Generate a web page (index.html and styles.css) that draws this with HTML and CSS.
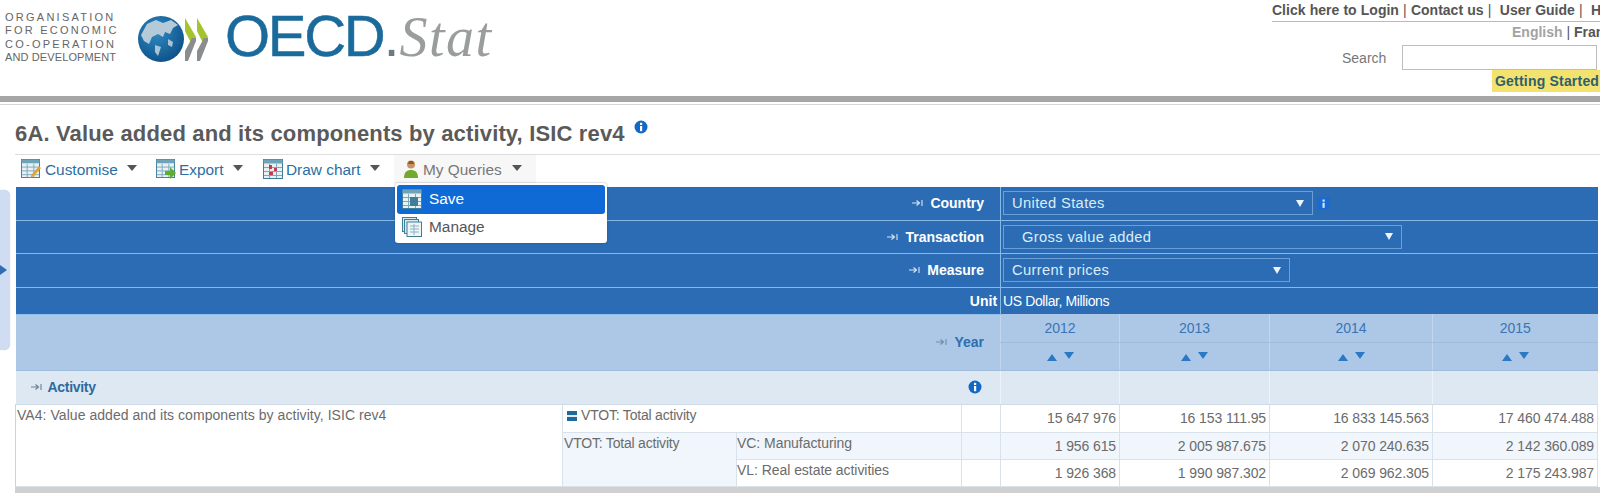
FILE: index.html
```html
<!DOCTYPE html>
<html lang="en">
<head>
<meta charset="utf-8">
<title>OECD.Stat</title>
<link rel="stylesheet" href="styles.css">
</head>
<body>
<svg class="defs" width="0" height="0" aria-hidden="true">
  <symbol id="pin" viewBox="0 0 12 10"><path d="M0 5h7M4.500 2.500 7.500 5l-3 2.500M10 2v6" fill="none" stroke="currentColor" stroke-width="1.1"/></symbol>
  <symbol id="info" viewBox="0 0 14 14"><circle cx="7" cy="7" r="6.500" fill="#1268c4"/><rect x="6" y="2.800" width="2.200" height="2.200" fill="#fff"/><rect x="6" y="6" width="2.200" height="5.200" fill="#fff"/></symbol>
  <symbol id="grid" viewBox="0 0 20 20"><rect x=".5" y=".5" width="19" height="19" fill="#eaf1f5" stroke="#3c7f96"/><rect x=".5" y=".5" width="19" height="4" fill="#6ea3b8"/><path d="M1 8.500h18M1 12.500h18M1 16.500h18M6.500 5v14M13.500 5v14" stroke="#7ba9bb"/></symbol>
</svg>

<header class="masthead">
  <div class="brand">
    <div class="org">
      <span>ORGANISATION</span>
      <span>FOR ECONOMIC</span>
      <span>CO-OPERATION</span>
      <span class="org-last">AND DEVELOPMENT</span>
    </div>
    <svg class="globe" width="72" height="48" viewBox="0 0 72 48">
      <defs><radialGradient id="sea" cx="40%" cy="35%" r="70%"><stop offset="0" stop-color="#2f8bc4"/><stop offset="1" stop-color="#0d4f86"/></radialGradient></defs>
      <circle cx="23" cy="24" r="23" fill="url(#sea)"/>
      <path d="M3 20 9 9l9-4 7 3 8-3 7 5-5 3-3 6-5-2-2 5-5-3-6 3-3 7-5-3z" fill="#b4cad8"/>
      <path d="M30 24l5 3-1 5-4-2zM17 30l6 2-3 9-3-4z" fill="#a9c3d4"/>
      <path d="M47 3l11 19-3.500 9L47 16z" fill="#a3c42c"/><path d="M58 23v3L50 46h-3V36l7-13z" fill="#8a8d90"/>
      <path d="M59 3l11 19-3.500 9L59 16z" fill="#a3c42c"/><path d="M70 23v3L62 46h-3V36l7-13z" fill="#8a8d90"/>
    </svg>
    <div class="wordmark"><span class="oecd">OECD</span><span class="dot">.</span><span class="stat">Stat</span></div>
  </div>
  <div class="toplinks">
    <div class="links"><b>Click here to Login</b> | <b>Contact us</b> |&nbsp; <b>User Guide</b> |&nbsp; <b>Help</b></div>
    <div class="lang"><span class="lang-on">English</span> | <b>Français</b></div>
    <div class="search"><label for="q">Search</label><input id="q" class="search-box" type="text"></div>
    <div class="started"><span>Getting Started</span></div>
  </div>
</header>
<div class="bar"></div>
<div class="rule"></div>

<h1 class="title">6A. Value added and its components by activity, ISIC rev4 <svg class="title-info"><use href="#info"/></svg></h1>

<nav class="toolbar">
  <div class="tool tool-customise">
    <svg class="tool-ico" viewBox="0 0 21 21"><use href="#grid" width="19" height="19"/><path d="M9 19l2-4 7-8 2 2-7 8z" fill="#e2a33a"/></svg>
    <span>Customise</span><i class="caret"></i>
  </div>
  <div class="tool tool-export">
    <svg class="tool-ico" viewBox="0 0 21 21"><use href="#grid" width="19" height="19"/><path d="M9 12h5V8l6 6-6 6v-4H9z" fill="#5eae2e"/></svg>
    <span>Export</span><i class="caret"></i>
  </div>
  <div class="tool tool-chart">
    <svg class="tool-ico" viewBox="0 0 21 21"><use href="#grid" width="20" height="20"/><path d="M6 6h3v4H6zM11 9h3v3h-3zM6 13h4v3H6z" fill="#c43b4a"/></svg>
    <span>Draw chart</span><i class="caret"></i>
  </div>
  <div class="tool tool-queries">
    <svg class="tool-ico" viewBox="0 0 21 21"><circle cx="10" cy="5.500" r="4" fill="#c9925f"/><path d="M8 2h4l1 3H7z" fill="#8a5a32"/><path d="M3 19c0-6 3-8 7-8s7 2 7 8z" fill="#72a92f"/></svg>
    <span>My Queries</span><i class="caret"></i>
    <div class="menu">
      <div class="menu-item menu-on">
        <svg class="menu-ico" viewBox="0 0 20 20"><use href="#grid"/><rect x="8" y="8" width="8" height="9" fill="#3c7f96"/></svg>
        <span>Save</span>
      </div>
      <div class="menu-item">
        <svg class="menu-ico" viewBox="0 0 20 20"><rect x=".5" y=".5" width="14" height="14" fill="#dbe9ef" stroke="#3c7f96"/><rect x="2.500" y="2.500" width="14" height="14" fill="#dbe9ef" stroke="#3c7f96"/><rect x="5" y="5" width="14.500" height="14.500" fill="#eef4f7" stroke="#3c7f96"/><path d="M8 9h9M8 12h9M8 15h9M12 7v11" stroke="#8db3c2"/></svg>
        <span>Manage</span>
      </div>
    </div>
  </div>
</nav>

<div class="side-tab"><i class="side-arrow"></i></div>

<table class="data">
  <colgroup>
    <col class="c-a"><col class="c-b"><col class="c-c"><col class="c-d">
    <col class="c-y1"><col class="c-y2"><col class="c-y3"><col class="c-y4">
  </colgroup>
  <tr class="filter h33">
    <th colspan="4" class="f-label"><svg class="pin"><use href="#pin"/></svg>Country</th>
    <td colspan="4" class="f-val"><div class="f-row"><div class="sel sel-country"><span>United States</span><i class="sel-caret"></i></div><svg class="f-info" viewBox="0 0 13 13"><rect width="13" height="13" rx="3" fill="#1a6ad0"/><rect x="5.500" y="2.500" width="2.200" height="2.200" fill="#cfe4fa"/><rect x="5.500" y="5.800" width="2.200" height="5" fill="#cfe4fa"/></svg></div></td>
  </tr>
  <tr class="filter h33">
    <th colspan="4" class="f-label"><svg class="pin"><use href="#pin"/></svg>Transaction</th>
    <td colspan="4" class="f-val"><div class="sel sel-trans"><span>Gross value added</span><i class="sel-caret"></i></div></td>
  </tr>
  <tr class="filter h34">
    <th colspan="4" class="f-label"><svg class="pin"><use href="#pin"/></svg>Measure</th>
    <td colspan="4" class="f-val"><div class="sel sel-measure"><span>Current prices</span><i class="sel-caret"></i></div></td>
  </tr>
  <tr class="filter unit">
    <th colspan="4" class="u-label">Unit</th>
    <td colspan="4" class="u-val">US Dollar, Millions</td>
  </tr>
  <tr class="year">
    <th colspan="4" rowspan="2" class="y-label"><svg class="pin"><use href="#pin"/></svg>Year</th>
    <td>2012</td><td>2013</td><td>2014</td><td>2015</td>
  </tr>
  <tr class="year sort">
    <td><i class="up"></i><i class="down"></i></td><td><i class="up"></i><i class="down"></i></td><td><i class="up"></i><i class="down"></i></td><td><i class="up"></i><i class="down"></i></td>
  </tr>
  <tr class="activity">
    <th colspan="4" class="a-label"><div class="a-row"><span><svg class="pin"><use href="#pin"/></svg>Activity</span><svg class="a-info"><use href="#info"/></svg></div></th>
    <td></td><td></td><td></td><td></td>
  </tr>
  <tr class="row row-first">
    <td rowspan="3" class="lead lead-main">VA4: Value added and its components by activity, ISIC rev4</td>
    <td colspan="2" class="lead"><i class="minus"></i>VTOT: Total activity</td>
    <td></td>
    <td class="n">15 647 976</td><td class="n">16 153 111.95</td><td class="n">16 833 145.563</td><td class="n">17 460 474.488</td>
  </tr>
  <tr class="row alt">
    <td rowspan="2" class="lead">VTOT: Total activity</td>
    <td class="lead lead-sub">VC: Manufacturing</td>
    <td></td>
    <td class="n">1 956 615</td><td class="n">2 005 987.675</td><td class="n">2 070 240.635</td><td class="n">2 142 360.089</td>
  </tr>
  <tr class="row">
    <td class="lead lead-sub">VL: Real estate activities</td>
    <td></td>
    <td class="n">1 926 368</td><td class="n">1 990 987.302</td><td class="n">2 069 962.305</td><td class="n">2 175 243.987</td>
  </tr>
</table>
<div class="footer-bar"></div>
</body>
</html>
```

FILE: styles.css
```css
html, body { margin: 0; padding: 0; height: 493px; overflow: hidden; background: #fff; }
body { position: relative; font-family: "Liberation Sans", Arial, sans-serif; color: #6b6b6b; font-size: 14px; }
.defs { position: absolute; }

.masthead { height: 96px; display: flex; justify-content: space-between; overflow: hidden; }
.brand { display: flex; align-items: flex-start; }
.org { display: flex; flex-direction: column; margin: 11px 0 0 5px; width: 133px; font-size: 11px; line-height: 13.300px; letter-spacing: 2.250px; color: #666; white-space: nowrap; }
.org-last { letter-spacing: .12px; }
.globe { margin-top: 15px; }
.wordmark { margin: 0 0 0 15px; display: flex; align-items: baseline; line-height: 72px; white-space: nowrap; }
.oecd { font-size: 58px; letter-spacing: -2.300px; color: #1b6a9c; -webkit-text-stroke: .5px #1b6a9c; }
.dot { font-size: 58px; color: #6f7a80; }
.stat { font-family: "Liberation Serif", serif; font-style: italic; font-size: 56px; color: #9a9d9e; letter-spacing: 1.500px; }

.toplinks { width: 328px; white-space: nowrap; overflow: hidden; display: flex; flex-direction: column; }
.links { margin-top: 3px; height: 18px; line-height: 15px; border-bottom: 1px solid #bbb; font-size: 14px; color: #555; width: 328px; word-spacing: .3px; }
.links b { font-weight: bold; }
.lang { padding-left: 240px; line-height: 20px; color: #555; font-size: 14px; }
.lang-on { color: #a3a3a3; font-weight: bold; }
.search { display: flex; align-items: center; margin-top: 3px; padding-left: 70px; }
.search label { width: 60px; color: #777; font-size: 14px; }
.search-box { box-sizing: border-box; width: 195px; height: 25px; border: 1px solid #bdbdbd; padding: 0; background: #fff; margin: 0; flex: none; }
.started { padding-left: 220px; }
.started span { display: block; background: #f3e26e; height: 22px; line-height: 22px; padding-left: 3px; color: #2e5f6e; font-weight: bold; font-size: 14px; letter-spacing: .2px; width: 110px; }

.bar { height: 6px; background: #a6a6a6; }
.rule { height: 1px; margin-top: 2px; background: #d6d6d6; }

.title { margin: 0; padding: 0 0 0 15px; height: 49px; box-sizing: border-box; padding-top: 16px; font-size: 22px; letter-spacing: .15px; line-height: 26px; font-weight: bold; color: #5a5a5a; white-space: nowrap; display: flex; align-items: flex-start; gap: 9px; }
.title-info { width: 14px; height: 14px; margin-top: -1px; }

.toolbar { margin-left: 15px; height: 29px; border-top: 1px solid #ddd; box-sizing: border-box; display: flex; color: #2c6ea3; font-size: 15.400px; }
.tool { display: flex; align-items: center; height: 28px; box-sizing: border-box; padding: 1px 0 0 6px; position: relative; white-space: nowrap; }
.tool-customise { width: 139px; }
.tool-export { width: 105px; padding-left: 2px; }
.tool-chart { width: 135px; padding-left: 4px; }
.tool-queries { width: 142px; background: #f7f7f7; color: #777; padding-left: 7px; }
.tool-ico { width: 21px; height: 21px; margin-right: 3px; flex: none; }
.tool-export .tool-ico, .tool-chart .tool-ico { margin-right: 2px; }
.tool-queries .tool-ico { margin-right: 1px; }
.caret { width: 0; height: 0; border: 5px solid transparent; border-top: 6px solid #555; border-bottom: 0; margin: -4px 0 0 10px; }
.tool-customise .caret { margin-left: 9px; }

.menu { position: absolute; left: 1px; top: 28px; width: 212px; height: 60px; box-sizing: border-box; padding: 2px; background: #fff; border-radius: 3px; box-shadow: 0 0 2px rgba(40,60,90,.5); z-index: 3; color: #555; font-size: 15.400px; }
.menu-item { height: 28px; box-sizing: border-box; padding: 0 0 2px 5px; display: flex; align-items: center; border-radius: 3px; }
.menu-on { background: #0f6ad6; color: #fff; height: 29px; }
.menu-ico { width: 20px; height: 20px; margin-right: 7px; }

.side-tab { position: absolute; left: 0; top: 190px; width: 10px; height: 160px; background: #cfdcf2; border-radius: 0 6px 6px 0; box-shadow: 0 0 1px #9fb2d0; }
.side-arrow { position: absolute; left: 0; top: 75px; width: 0; height: 0; border: 5px solid transparent; border-left: 7px solid #2f6db3; border-right: 0; }

.data { margin: 4px 0 0 15px; width: 1582px; table-layout: fixed; border-collapse: collapse; }
.c-a { width: 547px; } .c-b { width: 174px; } .c-c { width: 225px; } .c-d { width: 39px; }
.c-y1 { width: 119px; } .c-y2 { width: 150px; } .c-y3 { width: 163px; } .c-y4 { width: 165px; }
.data th, .data td { padding: 0; box-sizing: border-box; }

.filter { background: #2b6cb5; color: #fff; }
.h33 { height: 33px; } .h34 { height: 34px; }
.filter th, .filter td { border-bottom: 1px solid #86b8e8; border-left: 0; }
.f-val, .u-val { border-left: 1px solid #86b8e8 !important; padding-left: 2px !important; }
.f-label { text-align: right; padding-right: 16px !important; font-size: 14px; }
.pin { width: 12px; height: 10px; margin-right: 6px; color: #d7e6f5; }
.f-row { display: flex; align-items: center; }
.sel { box-sizing: border-box; height: 24px; border: 1px solid #6b9fd8; display: flex; align-items: center; justify-content: space-between; padding: 0 8px 0 8px; color: #dcecf8; font-size: 14.700px; letter-spacing: .35px; }
.sel-country { width: 310px; }
.sel-trans { width: 399px; padding-left: 18px; }
.sel-measure { width: 287px; }
.sel-caret { width: 0; height: 0; border: 4px solid transparent; border-top: 7px solid #eef5fb; border-bottom: 0; }
.f-info { width: 13px; height: 13px; margin-left: 4px; }
.unit { height: 27px; }
.unit th, .unit td { border-bottom: 0; }
.u-label { text-align: right; padding-right: 3px !important; font-size: 14px; }
.u-val { font-size: 14px; letter-spacing: -.4px; }

.year { background: #adc8e6; height: 28px; color: #3a74b3; text-align: center; }
.year td { border-left: 1px solid #c2d6ec; border-bottom: 1px solid #9fbcdd; font-size: 14px; }
.y-label { text-align: right; padding-right: 16px !important; color: #2d6fb1; font-size: 14px; border-top: 1px solid #8fc0ec; border-bottom: 1px solid #9fbcdd; }
.y-label .pin { color: #6b8db3; }
.sort td { font-size: 0; }
.up, .down { display: inline-block; width: 0; height: 0; border: 5px solid transparent; margin: 0 3.500px; }
.up { border-bottom: 7px solid #2b78c4; border-top: 0; }
.down { border-top: 7px solid #2b78c4; border-bottom: 0; margin-bottom: 2px; }

.activity { background: #dde8f3; height: 34px; }
.activity td { border-left: 1px solid #eef3f9; border-bottom: 1px solid #cfdbe8; }
.a-label { text-align: left; color: #2d6a9f; font-size: 14px; border-bottom: 1px solid #cfdbe8; }
.a-row { display: flex; justify-content: space-between; align-items: center; padding: 0 18px 0 15px; letter-spacing: -.3px; }
.a-label .pin { color: #6b7f92; margin-right: 5px; }
.a-info { width: 14px; height: 14px; }

.row { height: 27px; }
.row-first { height: 28px; }
.row td { border: 1px solid #d9e2ea; border-top: 0; vertical-align: middle; }
.lead { vertical-align: top !important; line-height: 15px; padding: 3px 0 0 1px !important; white-space: nowrap; letter-spacing: -.2px; }
.lead-main { letter-spacing: .05px; padding-left: 1px !important; }
.lead-sub { letter-spacing: -.05px; padding-left: 0 !important; }
.alt td { background: #f0f6fc; }
.row .lead-main { background: #fff; border-left: 1px solid #c6d2dc; }
.n { text-align: right; padding-right: 3px !important; letter-spacing: -.1px; }
.minus { display: inline-block; width: 10px; height: 10px; background: linear-gradient(#1d6a9f 40%, #dfeaf2 40%, #dfeaf2 60%, #1d6a9f 60%); margin: 0 4px 0 3px; vertical-align: -1px; }

.footer-bar { height: 10px; background: #d0d0d0; margin-left: 15px; }
```
